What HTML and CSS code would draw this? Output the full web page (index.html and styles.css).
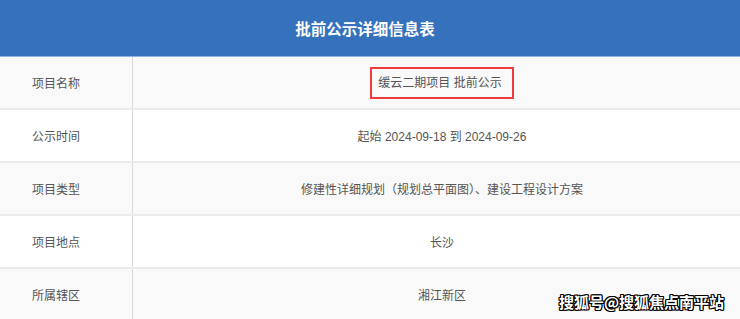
FILE: index.html
```html
<!DOCTYPE html>
<html lang="zh">
<head>
<meta charset="utf-8">
<link rel="stylesheet" href="styles.css">
</head>
<body>
<div class="page">
  <div class="title">批前公示详细信息表</div>
  <div class="table">
    <div class="row odd">
      <div class="label">项目名称</div>
      <div class="value"><span class="hl">缓云二期项目 批前公示</span></div>
    </div>
    <div class="row">
      <div class="label">公示时间</div>
      <div class="value">起始 2024-09-18 到 2024-09-26</div>
    </div>
    <div class="row odd">
      <div class="label">项目类型</div>
      <div class="value">修建性详细规划（规划总平面图）、建设工程设计方案</div>
    </div>
    <div class="row">
      <div class="label">项目地点</div>
      <div class="value">长沙</div>
    </div>
    <div class="row odd">
      <div class="label">所属辖区</div>
      <div class="value">湘江新区</div>
    </div>
  </div>
  <div class="watermark">搜狐号@搜狐焦点南平站</div>
</div>
</body>
</html>
```

FILE: styles.css
```css
html, body {
  margin: 0;
  padding: 0;
  background: #ffffff;
}
.page {
  position: relative;
  width: 740px;
  height: 319px;
  overflow: hidden;
  font-family: "Liberation Sans", "Noto Sans CJK SC", sans-serif;
  color: #555555;
  font-size: 12px;
}
.title {
  height: 56px;
  background: #3572bb;
  border-bottom: 1px solid #8fb3de;
  color: #ffffff;
  font-weight: bold;
  font-size: 15.5px;
  display: flex;
  align-items: center;
  justify-content: center;
  padding-right: 10px;
  box-sizing: content-box;
}
.table {
  display: flex;
  flex-direction: column;
}
.row {
  display: grid;
  grid-template-columns: 133px 1fr;
  height: 51px;
  border-bottom: 2px solid #ebebeb;
  background: #ffffff;
}
.row.odd {
  background: #f9f9f9;
}
.label {
  border-right: 1px solid #d9d9d9;
  display: flex;
  align-items: center;
  padding-left: 32px;
}
.value {
  display: flex;
  align-items: center;
  justify-content: center;
  padding-left: 11px;
}
.hl {
  border: 2px solid #ec3c3c;
  padding: 7px 10px 7px 6px;
  line-height: 14px;
}
.watermark {
  position: absolute;
  right: 16px;
  bottom: 7px;
  color: #ffffff;
  font-family: "Noto Sans CJK SC", sans-serif;
  font-size: 15px;
  font-weight: bold;
  letter-spacing: 0;
  text-shadow: 1px 0 0 #000, -1px 0 0 #000, 0 1px 0 #000, 0 -1px 0 #000, 1px 1px 0 #000, -1px -1px 0 #000, 1px -1px 0 #000, -1px 1px 0 #000;
}
```
